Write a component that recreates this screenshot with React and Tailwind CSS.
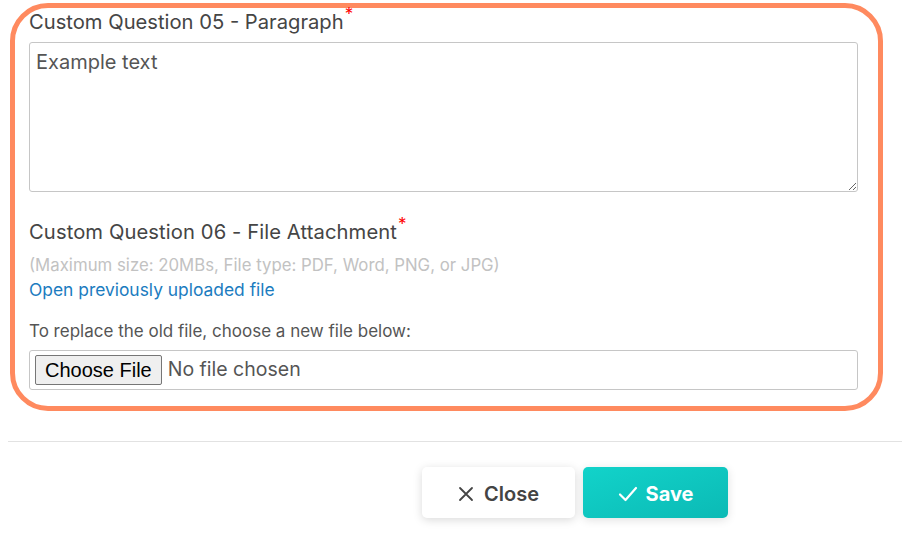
import React from 'react'

function Star() {
  return <span className="relative -top-[9px] ml-[1px] text-[#f00] text-[17px] leading-none">*</span>
}

export default function App() {
  return (
    <div className="w-[902px] h-[550px] bg-white overflow-hidden font-['Inter',_'Noto_Sans',_sans-serif] text-[#444]">
      <div className="ml-[10px] mt-[3px] w-[873px] h-[408px] rounded-[38px] border-[5px] border-[#ff8a5f] pl-[14px] pr-[20px]">
        <label className="block mt-[1px] text-[20.2px] leading-[26px] text-[#454545]">
          Custom Question 05 - Paragraph<Star />
        </label>
        <textarea
          className="block mt-[7px] w-full h-[150px] rounded-[3px] border border-[#c6c6c6] px-[6px] py-[6px] text-[20px] leading-[26px] text-[#555] placeholder:text-[#555] outline-none"
          placeholder="Example text"
        />
        <label className="block mt-[27px] text-[20.2px] tracking-[0.1px] leading-[26px] text-[#454545]">
          Custom Question 06 - File Attachment<Star />
        </label>
        <p className="mt-[8px] text-[16.8px] leading-[24px] text-[#c2c2c2]">
          (Maximum size: 20MBs, File type: PDF, Word, PNG, or JPG)
        </p>
        <a className="block text-[17.4px] leading-[26px] text-[#1b7cc0]" href="#">Open previously uploaded file</a>
        <p className="mt-[15px] text-[17px] leading-[26px] text-[#555]">
          To replace the old file, choose a new file below:
        </p>
        <div className="mt-[6px] w-full h-[40px] rounded-[3px] border border-[#c6c6c6] flex items-center px-[5px] gap-[6px]">
          <span className="h-[30px] px-[9px] flex items-center border border-[#767676] rounded-[2px] bg-[#efefef] text-[20px] text-black font-['Liberation_Sans',_Arial,_sans-serif]">
            Choose File
          </span>
          <span className="text-[19.5px] text-[#555]">No file chosen</span>
        </div>
      </div>
      <div className="mt-[30px] ml-[8px] h-px bg-[#e2e2e2]" />
      <div className="mt-[25px] flex gap-[8px] pl-[422px]">
        <button className="w-[153px] h-[51px] rounded-[5px] bg-white shadow-[0_2px_10px_rgba(0,0,0,0.15)] flex items-center justify-center gap-[10px] pt-[3px] text-[20px] font-semibold text-[#444]">
          <svg width="16" height="16" viewBox="0 0 16 16" fill="none" stroke="#444" strokeWidth="1.8" strokeLinecap="round">
            <path d="M2 2l12 12M14 2L2 14" />
          </svg>
          Close
        </button>
        <button className="w-[145px] h-[51px] rounded-[5px] bg-gradient-to-br from-[#12d3ca] to-[#0bbab5] shadow-[0_2px_10px_rgba(0,0,0,0.12)] flex items-center justify-center gap-[8px] pt-[3px] text-[20px] font-bold text-white">
          <svg width="20" height="16" viewBox="0 0 20 16" fill="none" stroke="#fff" strokeWidth="2.2" strokeLinecap="round" strokeLinejoin="round">
            <path d="M2 8.5l5.5 5.5L18 2" />
          </svg>
          Save
        </button>
      </div>
    </div>
  )
}
